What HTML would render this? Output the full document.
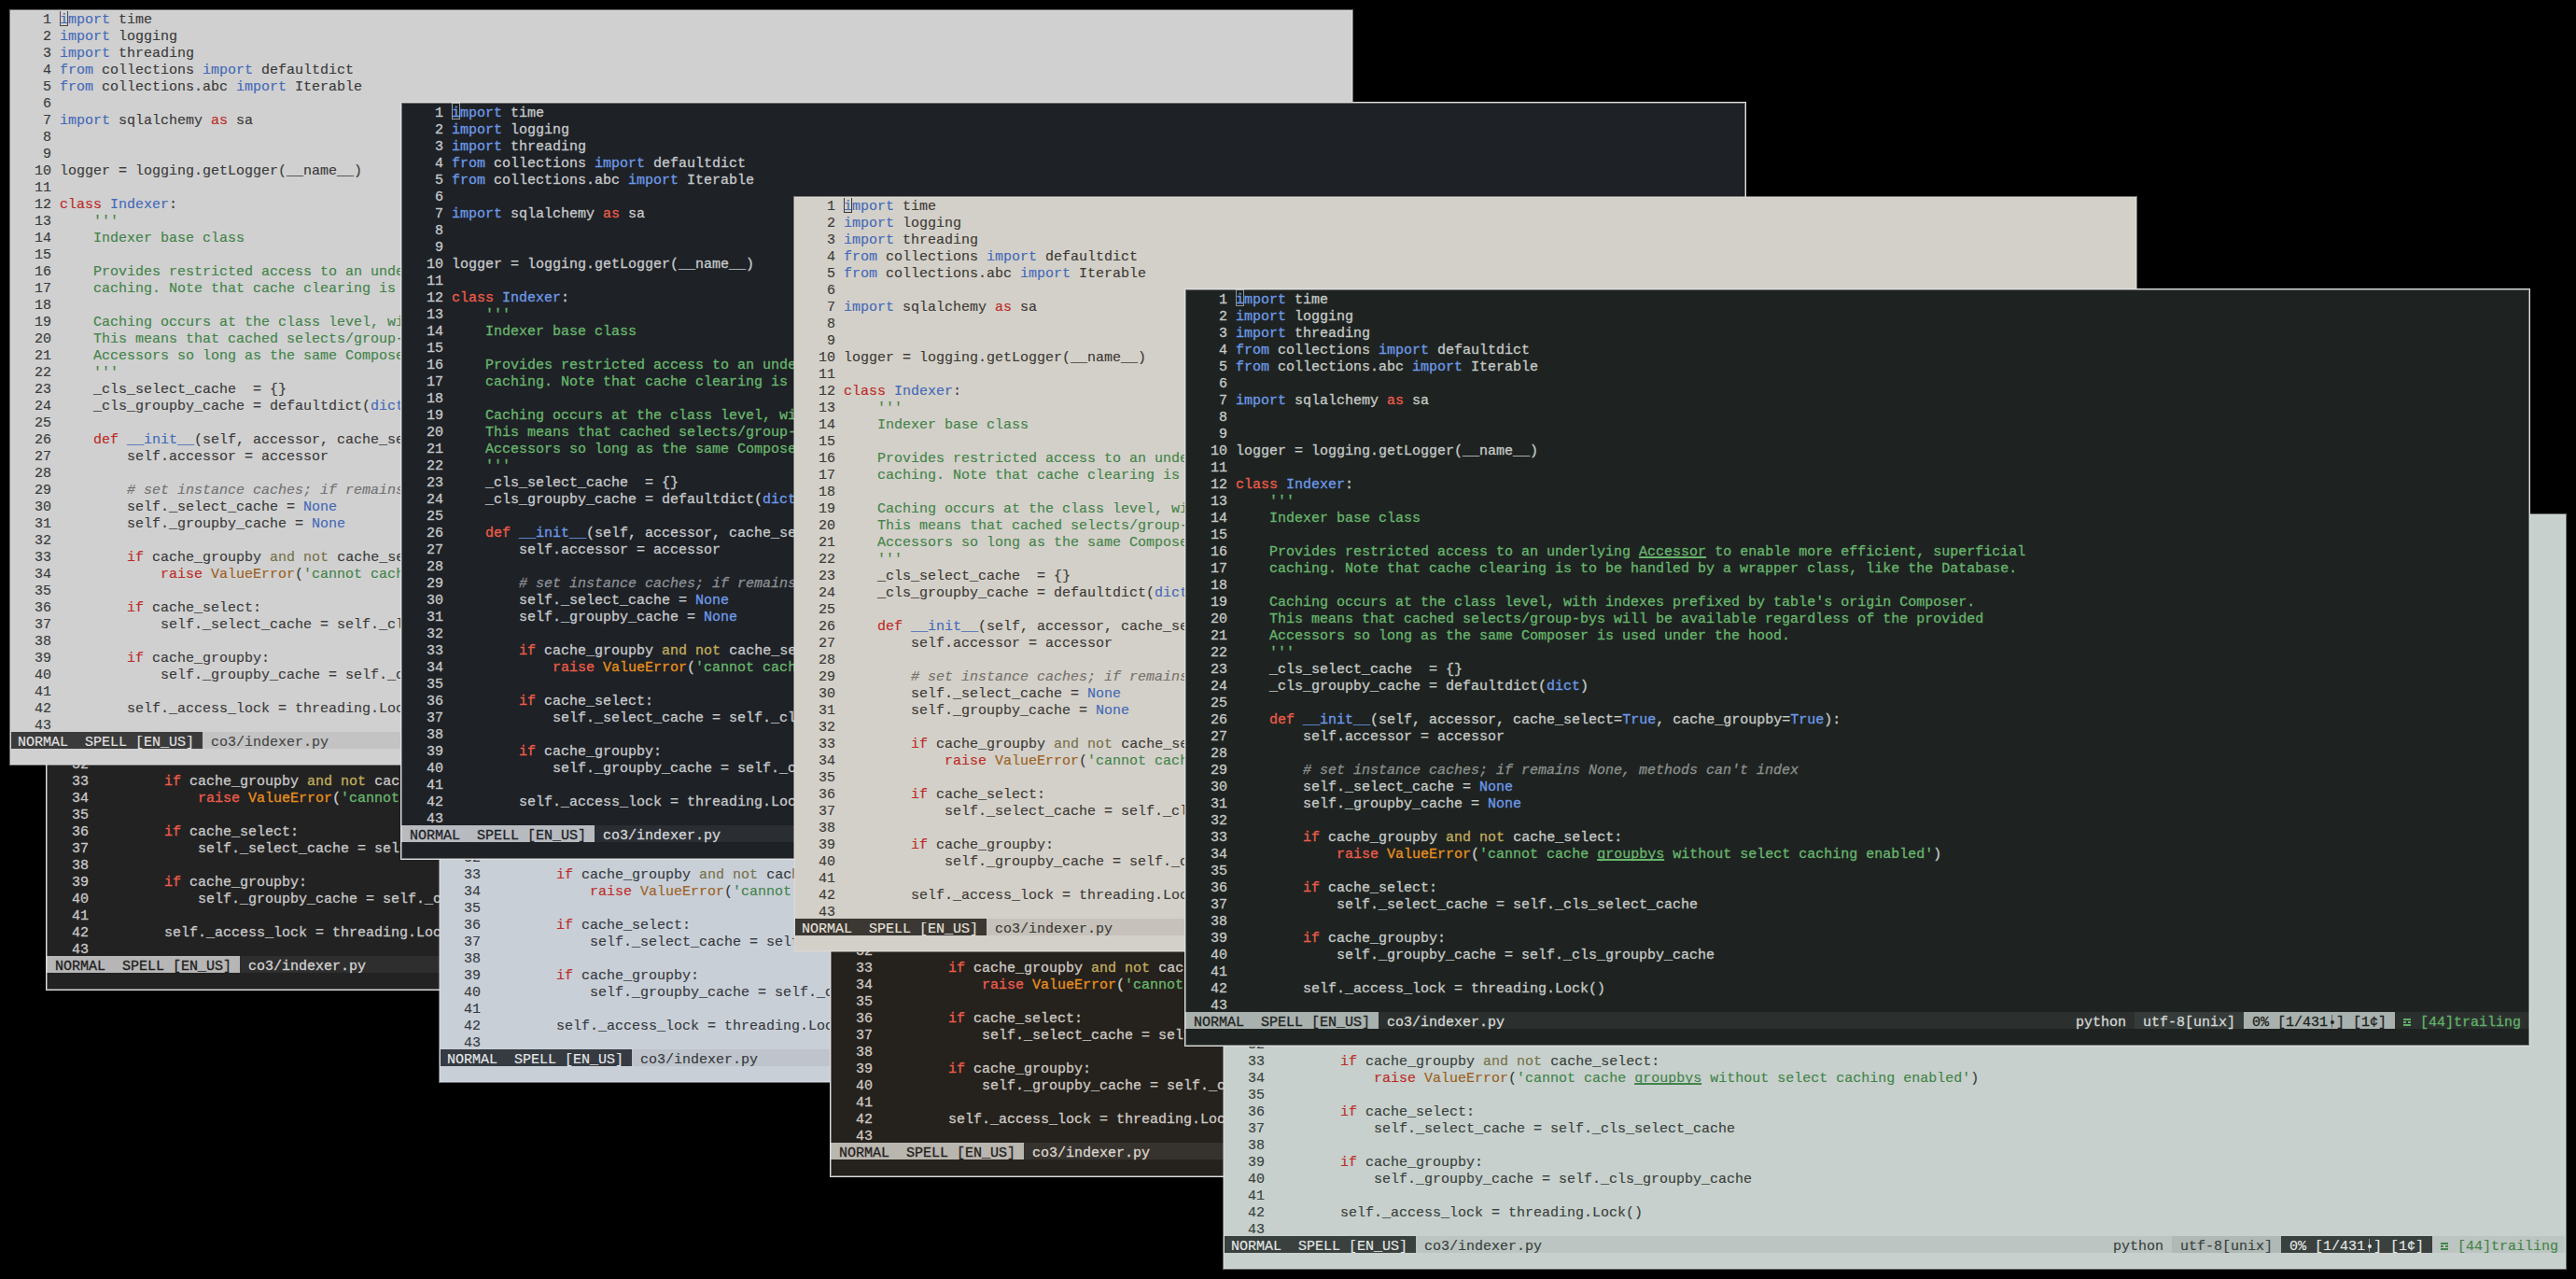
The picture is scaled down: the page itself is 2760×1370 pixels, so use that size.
<!DOCTYPE html><html><head><meta charset="utf-8"><style>
.lt{width:1436px!important;height:806px!important;}
.lt .code{left:-2px;top:1px;}
.lt .st{left:-2px;top:772px;}
html,body{margin:0;padding:0;background:#000;}
body{width:2760px;height:1370px;overflow:hidden;position:relative;}
.win{position:absolute;width:1440px;height:810px;overflow:hidden;font-family:"Liberation Mono",monospace;font-size:15px;line-height:18px;white-space:pre;-webkit-text-stroke:0.35px currentColor;}
.code{position:absolute;left:0;top:3px;width:1440px;}
.l{height:18px;position:relative;}
.l span, .st span{position:relative;}
.st{position:absolute;left:0;top:774px;width:1440px;height:18px;}
.st>span{position:absolute;top:0;height:15px;padding-top:3px;}
.md{left:0;width:207px;}
.md b{font-weight:normal;}
.fn{left:207px;width:810px;}
.py{left:954px;width:63px;}
.ut{left:1017px;width:117px;}
.pc{left:1134px;width:162px;}
.tr{left:1296px;width:144px;}
.m{font-style:italic;}
.u{text-decoration:underline;text-decoration-thickness:2px;text-underline-offset:1px;text-decoration-skip-ink:none;}
.cur{position:absolute;left:54px;top:0;width:7px;height:16px;border:1px solid;}
.lt .cur{left:52px;top:-2px;}
.ln{display:inline-block;width:9px;height:18px;vertical-align:top;top:-3px;}
.ln:before{content:"";position:absolute;left:4px;top:3px;width:1px;height:14px;background:currentColor;opacity:.55;}
.ln:after{content:"";position:absolute;left:2.5px;top:8.5px;width:4px;height:4px;border-radius:50%;background:currentColor;}
.tg{display:inline-block;width:9px;height:18px;vertical-align:top;top:-3px;}
.tg i{position:absolute;left:0px;width:8px;height:2px;background:currentColor;}
.tg i:nth-child(1){top:7px}
.tg i:nth-child(2){top:10px;background:linear-gradient(90deg,currentColor 0 3px,transparent 3px 5px,currentColor 5px 8px);}
.tg i:nth-child(3){top:13px}

.w1{background:#d0d0d0;color:#3b3b3b;box-shadow:0 0 0 1px #d8d8d8,0 0 0 2px #d8d8d880;}
.w1 .n{color:#3b3b3b}
.w1 .cur{border-color:#4a4a4a}
.w1{-webkit-text-stroke-width:0.15px}
.w1 .k{color:#4569b8}
.w1 .s{color:#bd2c28}
.w1 .o{color:#76704a}
.w1 .e{color:#9b6124}
.w1 .d{color:#43844a}
.w1 .m{color:#727272}
.w1 .c,.w1 .f{color:#4569b8}
.w1 .u{color:#43844a}
.w1 .md{background:#3b3b3b;color:#e2e2e2}
.w1 .fn,.w1 .py,.w1 .tr{background:#c3c3c3;color:#454545}
.w1 .ut{background:#b8b8b8;color:#3b3b3b}
.w1 .pc{background:#3b3b3b;color:#e2e2e2}
.w1 .tr{color:#43844a}
.w1b{background:#222222;color:#c8c8c8;box-shadow:0 0 0 1px #e0e0e0;}
.w1b:after{content:"";position:absolute;left:0;top:0;right:0;bottom:0;box-shadow:inset 0 0 0 1px #e0e0e070;pointer-events:none;}
.w1b .n{color:#c8c8c8}
.w1b .cur{border-color:#d2d2d2}
.w1b{-webkit-text-stroke-width:0.3px}
.w1b .k{color:#6d9ae8}
.w1b .s{color:#ec5c4a}
.w1b .o{color:#c0ad5e}
.w1b .e{color:#e6901e}
.w1b .d{color:#68b66d}
.w1b .m{color:#8c8c8c}
.w1b .c,.w1b .f{color:#6d9ae8}
.w1b .u{color:#68b66d}
.w1b .md{background:#b6b6b6;color:#202020}
.w1b .fn,.w1b .py,.w1b .tr{background:#2e2e2e;color:#d2d2d2}
.w1b .ut{background:#383838;color:#d2d2d2}
.w1b .pc{background:#b6b6b6;color:#202020}
.w1b .tr{color:#62b068}
.w2{background:#1e2125;color:#c6c9cc;box-shadow:0 0 0 1px #e0e0e0;}
.w2:after{content:"";position:absolute;left:0;top:0;right:0;bottom:0;box-shadow:inset 0 0 0 1px #e0e0e070;pointer-events:none;}
.w2 .n{color:#c6c9cc}
.w2 .cur{border-color:#9a9da2}
.w2{-webkit-text-stroke-width:0.3px}
.w2 .k{color:#6d9ae8}
.w2 .s{color:#ec5c4a}
.w2 .o{color:#c0ad5e}
.w2 .e{color:#e6901e}
.w2 .d{color:#68b66d}
.w2 .m{color:#8c9096}
.w2 .c,.w2 .f{color:#6d9ae8}
.w2 .u{color:#68b66d}
.w2 .md{background:#b7bbc0;color:#1e2125}
.w2 .fn,.w2 .py,.w2 .tr{background:#2a2e33;color:#d3d5d8}
.w2 .ut{background:#353a40;color:#d3d5d8}
.w2 .pc{background:#b7bbc0;color:#1e2125}
.w2 .tr{color:#62b068}
.w2b{background:#c9cfd7;color:#363a40;box-shadow:0 0 0 1px #d3d9e0,0 0 0 2px #d3d9e080;}
.w2b .n{color:#363a40}
.w2b .cur{border-color:#363a40}
.w2b{-webkit-text-stroke-width:0.15px}
.w2b .k{color:#4569b8}
.w2b .s{color:#bd2c28}
.w2b .o{color:#76704a}
.w2b .e{color:#9b6124}
.w2b .d{color:#43844a}
.w2b .m{color:#6e737a}
.w2b .c,.w2b .f{color:#4569b8}
.w2b .u{color:#43844a}
.w2b .md{background:#363b41;color:#e4e8ec}
.w2b .fn,.w2b .py,.w2b .tr{background:#bfc4cc;color:#363a40}
.w2b .ut{background:#b3b8c0;color:#363a40}
.w2b .pc{background:#363b41;color:#e4e8ec}
.w2b .tr{color:#43844a}
.w3{background:#d3d0c9;color:#3d3a36;box-shadow:0 0 0 1px #dad8d3,0 0 0 2px #dad8d380;}
.w3 .n{color:#3d3a36}
.w3 .cur{border-color:#3d3a36}
.w3{-webkit-text-stroke-width:0.15px}
.w3 .k{color:#4569b8}
.w3 .s{color:#bd2c28}
.w3 .o{color:#76704a}
.w3 .e{color:#9b6124}
.w3 .d{color:#43844a}
.w3 .m{color:#75716b}
.w3 .c,.w3 .f{color:#4569b8}
.w3 .u{color:#43844a}
.w3 .md{background:#3b3733;color:#e6e2db}
.w3 .fn,.w3 .py,.w3 .tr{background:#c6c2bb;color:#3d3a36}
.w3 .ut{background:#bab6af;color:#3d3a36}
.w3 .pc{background:#3b3733;color:#e6e2db}
.w3 .tr{color:#43844a}
.w3b{background:#25211d;color:#cdc9c2;box-shadow:0 0 0 1px #e0e0e0;}
.w3b:after{content:"";position:absolute;left:0;top:0;right:0;bottom:0;box-shadow:inset 0 0 0 1px #e0e0e070;pointer-events:none;}
.w3b .n{color:#cdc9c2}
.w3b .cur{border-color:#d9d5ce}
.w3b{-webkit-text-stroke-width:0.3px}
.w3b .k{color:#6d9ae8}
.w3b .s{color:#ec5c4a}
.w3b .o{color:#c0ad5e}
.w3b .e{color:#e6901e}
.w3b .d{color:#68b66d}
.w3b .m{color:#8f8a84}
.w3b .c,.w3b .f{color:#6d9ae8}
.w3b .u{color:#68b66d}
.w3b .md{background:#b9b6af;color:#25211d}
.w3b .fn,.w3b .py,.w3b .tr{background:#36322d;color:#d9d5ce}
.w3b .ut{background:#403b36;color:#d9d5ce}
.w3b .pc{background:#b9b6af;color:#25211d}
.w3b .tr{color:#62b068}
.w4{background:#1e2321;color:#c6cac7;box-shadow:0 0 0 1px #dfe0df;}
.w4:after{content:"";position:absolute;left:0;top:0;right:0;bottom:0;box-shadow:inset 0 0 0 1px #dfe0df70;pointer-events:none;}
.w4 .n{color:#c6cac7}
.w4 .cur{border-color:#8f9491}
.w4{-webkit-text-stroke-width:0.3px}
.w4 .k{color:#6d9ae8}
.w4 .s{color:#ec5c4a}
.w4 .o{color:#c0ad5e}
.w4 .e{color:#e6901e}
.w4 .d{color:#68b66d}
.w4 .m{color:#8b908d}
.w4 .c,.w4 .f{color:#6d9ae8}
.w4 .u{color:#68b66d}
.w4 .md{background:#a9b1ae;color:#1e2321}
.w4 .fn,.w4 .py,.w4 .tr{background:#2b302e;color:#d4d7d5}
.w4 .ut{background:#353b39;color:#d4d7d5}
.w4 .pc{background:#a9b1ae;color:#1e2321}
.w4 .tr{color:#62b068}
.w4b{background:#c7d0cc;color:#39403d;box-shadow:0 0 0 1px #d1d9d6,0 0 0 2px #d1d9d680;}
.w4b .n{color:#39403d}
.w4b .cur{border-color:#39403d}
.w4b{-webkit-text-stroke-width:0.15px}
.w4b .k{color:#4569b8}
.w4b .s{color:#bd2c28}
.w4b .o{color:#76704a}
.w4b .e{color:#9b6124}
.w4b .d{color:#43844a}
.w4b .m{color:#6e7572}
.w4b .c,.w4b .f{color:#4569b8}
.w4b .u{color:#43844a}
.w4b .md{background:#3a403e;color:#e2e8e5}
.w4b .fn,.w4b .py,.w4b .tr{background:#bcc5c1;color:#39403d}
.w4b .ut{background:#b0b9b5;color:#39403d}
.w4b .pc{background:#3a403e;color:#e2e8e5}
.w4b .tr{color:#43844a}</style></head><body><div class="win w1b" style="left:50px;top:250px;z-index:1"><div class="code"><div class="l"><span class="n">    1 </span><span class="k">import</span> time</div><div class="l"><span class="n">    2 </span><span class="k">import</span> logging</div><div class="l"><span class="n">    3 </span><span class="k">import</span> threading</div><div class="l"><span class="n">    4 </span><span class="k">from</span> collections <span class="k">import</span> defaultdict</div><div class="l"><span class="n">    5 </span><span class="k">from</span> collections.abc <span class="k">import</span> Iterable</div><div class="l"><span class="n">    6 </span></div><div class="l"><span class="n">    7 </span><span class="k">import</span> sqlalchemy <span class="s">as</span> sa</div><div class="l"><span class="n">    8 </span></div><div class="l"><span class="n">    9 </span></div><div class="l"><span class="n">   10 </span>logger = logging.getLogger(__name__)</div><div class="l"><span class="n">   11 </span></div><div class="l"><span class="n">   12 </span><span class="s">class</span> <span class="f">Indexer</span>:</div><div class="l"><span class="n">   13 </span>    <span class="d">'''</span></div><div class="l"><span class="n">   14 </span>    <span class="d">Indexer base class</span></div><div class="l"><span class="n">   15 </span></div><div class="l"><span class="n">   16 </span>    <span class="d">Provides restricted access to an underlying </span><span class="u">Accessor</span><span class="d"> to enable more efficient, superficial</span></div><div class="l"><span class="n">   17 </span>    <span class="d">caching. Note that cache clearing is to be handled by a wrapper class, like the Database.</span></div><div class="l"><span class="n">   18 </span></div><div class="l"><span class="n">   19 </span>    <span class="d">Caching occurs at the class level, with indexes prefixed by table's origin Composer.</span></div><div class="l"><span class="n">   20 </span>    <span class="d">This means that cached selects/group-bys will be available regardless of the provided</span></div><div class="l"><span class="n">   21 </span>    <span class="d">Accessors so long as the same Composer is used under the hood.</span></div><div class="l"><span class="n">   22 </span>    <span class="d">'''</span></div><div class="l"><span class="n">   23 </span>    _cls_select_cache  = {}</div><div class="l"><span class="n">   24 </span>    _cls_groupby_cache = defaultdict(<span class="c">dict</span>)</div><div class="l"><span class="n">   25 </span></div><div class="l"><span class="n">   26 </span>    <span class="s">def</span> <span class="f">__init__</span>(self, accessor, cache_select=<span class="c">True</span>, cache_groupby=<span class="c">True</span>):</div><div class="l"><span class="n">   27 </span>        self.accessor = accessor</div><div class="l"><span class="n">   28 </span></div><div class="l"><span class="n">   29 </span>        <span class="m"># set instance caches; if remains None, methods can't index</span></div><div class="l"><span class="n">   30 </span>        self._select_cache = <span class="c">None</span></div><div class="l"><span class="n">   31 </span>        self._groupby_cache = <span class="c">None</span></div><div class="l"><span class="n">   32 </span></div><div class="l"><span class="n">   33 </span>        <span class="s">if</span> cache_groupby <span class="o">and</span> <span class="o">not</span> cache_select:</div><div class="l"><span class="n">   34 </span>            <span class="s">raise</span> <span class="e">ValueError</span>(<span class="d">'cannot cache </span><span class="u">groupbys</span><span class="d"> without select caching enabled'</span>)</div><div class="l"><span class="n">   35 </span></div><div class="l"><span class="n">   36 </span>        <span class="s">if</span> cache_select:</div><div class="l"><span class="n">   37 </span>            self._select_cache = self._cls_select_cache</div><div class="l"><span class="n">   38 </span></div><div class="l"><span class="n">   39 </span>        <span class="s">if</span> cache_groupby:</div><div class="l"><span class="n">   40 </span>            self._groupby_cache = self._cls_groupby_cache</div><div class="l"><span class="n">   41 </span></div><div class="l"><span class="n">   42 </span>        self._access_lock = threading.Lock()</div><div class="l"><span class="n">   43 </span></div></div><div class="st"><span class="md"> <b>NORMAL</b>  SPELL [EN_US] </span><span class="fn"> co3/indexer.py</span><span class="py">python </span><span class="ut"> utf-8[unix] </span><span class="pc"> 0% [1/431<span class="ln"></span>] [1¢] </span><span class="tr"> <span class="tg"><i></i><i class="br"></i><i></i></span> [44]trailing </span></div></div>
<div class="win lt w1" style="left:12px;top:12px;z-index:2"><div class="code"><div class="l"><span class="n">    1 </span><span class="k">import</span> time</div><div class="l"><span class="n">    2 </span><span class="k">import</span> logging</div><div class="l"><span class="n">    3 </span><span class="k">import</span> threading</div><div class="l"><span class="n">    4 </span><span class="k">from</span> collections <span class="k">import</span> defaultdict</div><div class="l"><span class="n">    5 </span><span class="k">from</span> collections.abc <span class="k">import</span> Iterable</div><div class="l"><span class="n">    6 </span></div><div class="l"><span class="n">    7 </span><span class="k">import</span> sqlalchemy <span class="s">as</span> sa</div><div class="l"><span class="n">    8 </span></div><div class="l"><span class="n">    9 </span></div><div class="l"><span class="n">   10 </span>logger = logging.getLogger(__name__)</div><div class="l"><span class="n">   11 </span></div><div class="l"><span class="n">   12 </span><span class="s">class</span> <span class="f">Indexer</span>:</div><div class="l"><span class="n">   13 </span>    <span class="d">'''</span></div><div class="l"><span class="n">   14 </span>    <span class="d">Indexer base class</span></div><div class="l"><span class="n">   15 </span></div><div class="l"><span class="n">   16 </span>    <span class="d">Provides restricted access to an underlying </span><span class="u">Accessor</span><span class="d"> to enable more efficient, superficial</span></div><div class="l"><span class="n">   17 </span>    <span class="d">caching. Note that cache clearing is to be handled by a wrapper class, like the Database.</span></div><div class="l"><span class="n">   18 </span></div><div class="l"><span class="n">   19 </span>    <span class="d">Caching occurs at the class level, with indexes prefixed by table's origin Composer.</span></div><div class="l"><span class="n">   20 </span>    <span class="d">This means that cached selects/group-bys will be available regardless of the provided</span></div><div class="l"><span class="n">   21 </span>    <span class="d">Accessors so long as the same Composer is used under the hood.</span></div><div class="l"><span class="n">   22 </span>    <span class="d">'''</span></div><div class="l"><span class="n">   23 </span>    _cls_select_cache  = {}</div><div class="l"><span class="n">   24 </span>    _cls_groupby_cache = defaultdict(<span class="c">dict</span>)</div><div class="l"><span class="n">   25 </span></div><div class="l"><span class="n">   26 </span>    <span class="s">def</span> <span class="f">__init__</span>(self, accessor, cache_select=<span class="c">True</span>, cache_groupby=<span class="c">True</span>):</div><div class="l"><span class="n">   27 </span>        self.accessor = accessor</div><div class="l"><span class="n">   28 </span></div><div class="l"><span class="n">   29 </span>        <span class="m"># set instance caches; if remains None, methods can't index</span></div><div class="l"><span class="n">   30 </span>        self._select_cache = <span class="c">None</span></div><div class="l"><span class="n">   31 </span>        self._groupby_cache = <span class="c">None</span></div><div class="l"><span class="n">   32 </span></div><div class="l"><span class="n">   33 </span>        <span class="s">if</span> cache_groupby <span class="o">and</span> <span class="o">not</span> cache_select:</div><div class="l"><span class="n">   34 </span>            <span class="s">raise</span> <span class="e">ValueError</span>(<span class="d">'cannot cache </span><span class="u">groupbys</span><span class="d"> without select caching enabled'</span>)</div><div class="l"><span class="n">   35 </span></div><div class="l"><span class="n">   36 </span>        <span class="s">if</span> cache_select:</div><div class="l"><span class="n">   37 </span>            self._select_cache = self._cls_select_cache</div><div class="l"><span class="n">   38 </span></div><div class="l"><span class="n">   39 </span>        <span class="s">if</span> cache_groupby:</div><div class="l"><span class="n">   40 </span>            self._groupby_cache = self._cls_groupby_cache</div><div class="l"><span class="n">   41 </span></div><div class="l"><span class="n">   42 </span>        self._access_lock = threading.Lock()</div><div class="l"><span class="n">   43 </span></div></div><div class="cur"></div><div class="st"><span class="md"> <b>NORMAL</b>  SPELL [EN_US] </span><span class="fn"> co3/indexer.py</span><span class="py">python </span><span class="ut"> utf-8[unix] </span><span class="pc"> 0% [1/431<span class="ln"></span>] [1¢] </span><span class="tr"> <span class="tg"><i></i><i class="br"></i><i></i></span> [44]trailing </span></div></div>
<div class="win lt w2b" style="left:472px;top:352px;z-index:3"><div class="code"><div class="l"><span class="n">    1 </span><span class="k">import</span> time</div><div class="l"><span class="n">    2 </span><span class="k">import</span> logging</div><div class="l"><span class="n">    3 </span><span class="k">import</span> threading</div><div class="l"><span class="n">    4 </span><span class="k">from</span> collections <span class="k">import</span> defaultdict</div><div class="l"><span class="n">    5 </span><span class="k">from</span> collections.abc <span class="k">import</span> Iterable</div><div class="l"><span class="n">    6 </span></div><div class="l"><span class="n">    7 </span><span class="k">import</span> sqlalchemy <span class="s">as</span> sa</div><div class="l"><span class="n">    8 </span></div><div class="l"><span class="n">    9 </span></div><div class="l"><span class="n">   10 </span>logger = logging.getLogger(__name__)</div><div class="l"><span class="n">   11 </span></div><div class="l"><span class="n">   12 </span><span class="s">class</span> <span class="f">Indexer</span>:</div><div class="l"><span class="n">   13 </span>    <span class="d">'''</span></div><div class="l"><span class="n">   14 </span>    <span class="d">Indexer base class</span></div><div class="l"><span class="n">   15 </span></div><div class="l"><span class="n">   16 </span>    <span class="d">Provides restricted access to an underlying </span><span class="u">Accessor</span><span class="d"> to enable more efficient, superficial</span></div><div class="l"><span class="n">   17 </span>    <span class="d">caching. Note that cache clearing is to be handled by a wrapper class, like the Database.</span></div><div class="l"><span class="n">   18 </span></div><div class="l"><span class="n">   19 </span>    <span class="d">Caching occurs at the class level, with indexes prefixed by table's origin Composer.</span></div><div class="l"><span class="n">   20 </span>    <span class="d">This means that cached selects/group-bys will be available regardless of the provided</span></div><div class="l"><span class="n">   21 </span>    <span class="d">Accessors so long as the same Composer is used under the hood.</span></div><div class="l"><span class="n">   22 </span>    <span class="d">'''</span></div><div class="l"><span class="n">   23 </span>    _cls_select_cache  = {}</div><div class="l"><span class="n">   24 </span>    _cls_groupby_cache = defaultdict(<span class="c">dict</span>)</div><div class="l"><span class="n">   25 </span></div><div class="l"><span class="n">   26 </span>    <span class="s">def</span> <span class="f">__init__</span>(self, accessor, cache_select=<span class="c">True</span>, cache_groupby=<span class="c">True</span>):</div><div class="l"><span class="n">   27 </span>        self.accessor = accessor</div><div class="l"><span class="n">   28 </span></div><div class="l"><span class="n">   29 </span>        <span class="m"># set instance caches; if remains None, methods can't index</span></div><div class="l"><span class="n">   30 </span>        self._select_cache = <span class="c">None</span></div><div class="l"><span class="n">   31 </span>        self._groupby_cache = <span class="c">None</span></div><div class="l"><span class="n">   32 </span></div><div class="l"><span class="n">   33 </span>        <span class="s">if</span> cache_groupby <span class="o">and</span> <span class="o">not</span> cache_select:</div><div class="l"><span class="n">   34 </span>            <span class="s">raise</span> <span class="e">ValueError</span>(<span class="d">'cannot cache </span><span class="u">groupbys</span><span class="d"> without select caching enabled'</span>)</div><div class="l"><span class="n">   35 </span></div><div class="l"><span class="n">   36 </span>        <span class="s">if</span> cache_select:</div><div class="l"><span class="n">   37 </span>            self._select_cache = self._cls_select_cache</div><div class="l"><span class="n">   38 </span></div><div class="l"><span class="n">   39 </span>        <span class="s">if</span> cache_groupby:</div><div class="l"><span class="n">   40 </span>            self._groupby_cache = self._cls_groupby_cache</div><div class="l"><span class="n">   41 </span></div><div class="l"><span class="n">   42 </span>        self._access_lock = threading.Lock()</div><div class="l"><span class="n">   43 </span></div></div><div class="st"><span class="md"> <b>NORMAL</b>  SPELL [EN_US] </span><span class="fn"> co3/indexer.py</span><span class="py">python </span><span class="ut"> utf-8[unix] </span><span class="pc"> 0% [1/431<span class="ln"></span>] [1¢] </span><span class="tr"> <span class="tg"><i></i><i class="br"></i><i></i></span> [44]trailing </span></div></div>
<div class="win w2" style="left:430px;top:110px;z-index:4"><div class="code"><div class="l"><span class="n">    1 </span><span class="k">import</span> time</div><div class="l"><span class="n">    2 </span><span class="k">import</span> logging</div><div class="l"><span class="n">    3 </span><span class="k">import</span> threading</div><div class="l"><span class="n">    4 </span><span class="k">from</span> collections <span class="k">import</span> defaultdict</div><div class="l"><span class="n">    5 </span><span class="k">from</span> collections.abc <span class="k">import</span> Iterable</div><div class="l"><span class="n">    6 </span></div><div class="l"><span class="n">    7 </span><span class="k">import</span> sqlalchemy <span class="s">as</span> sa</div><div class="l"><span class="n">    8 </span></div><div class="l"><span class="n">    9 </span></div><div class="l"><span class="n">   10 </span>logger = logging.getLogger(__name__)</div><div class="l"><span class="n">   11 </span></div><div class="l"><span class="n">   12 </span><span class="s">class</span> <span class="f">Indexer</span>:</div><div class="l"><span class="n">   13 </span>    <span class="d">'''</span></div><div class="l"><span class="n">   14 </span>    <span class="d">Indexer base class</span></div><div class="l"><span class="n">   15 </span></div><div class="l"><span class="n">   16 </span>    <span class="d">Provides restricted access to an underlying </span><span class="u">Accessor</span><span class="d"> to enable more efficient, superficial</span></div><div class="l"><span class="n">   17 </span>    <span class="d">caching. Note that cache clearing is to be handled by a wrapper class, like the Database.</span></div><div class="l"><span class="n">   18 </span></div><div class="l"><span class="n">   19 </span>    <span class="d">Caching occurs at the class level, with indexes prefixed by table's origin Composer.</span></div><div class="l"><span class="n">   20 </span>    <span class="d">This means that cached selects/group-bys will be available regardless of the provided</span></div><div class="l"><span class="n">   21 </span>    <span class="d">Accessors so long as the same Composer is used under the hood.</span></div><div class="l"><span class="n">   22 </span>    <span class="d">'''</span></div><div class="l"><span class="n">   23 </span>    _cls_select_cache  = {}</div><div class="l"><span class="n">   24 </span>    _cls_groupby_cache = defaultdict(<span class="c">dict</span>)</div><div class="l"><span class="n">   25 </span></div><div class="l"><span class="n">   26 </span>    <span class="s">def</span> <span class="f">__init__</span>(self, accessor, cache_select=<span class="c">True</span>, cache_groupby=<span class="c">True</span>):</div><div class="l"><span class="n">   27 </span>        self.accessor = accessor</div><div class="l"><span class="n">   28 </span></div><div class="l"><span class="n">   29 </span>        <span class="m"># set instance caches; if remains None, methods can't index</span></div><div class="l"><span class="n">   30 </span>        self._select_cache = <span class="c">None</span></div><div class="l"><span class="n">   31 </span>        self._groupby_cache = <span class="c">None</span></div><div class="l"><span class="n">   32 </span></div><div class="l"><span class="n">   33 </span>        <span class="s">if</span> cache_groupby <span class="o">and</span> <span class="o">not</span> cache_select:</div><div class="l"><span class="n">   34 </span>            <span class="s">raise</span> <span class="e">ValueError</span>(<span class="d">'cannot cache </span><span class="u">groupbys</span><span class="d"> without select caching enabled'</span>)</div><div class="l"><span class="n">   35 </span></div><div class="l"><span class="n">   36 </span>        <span class="s">if</span> cache_select:</div><div class="l"><span class="n">   37 </span>            self._select_cache = self._cls_select_cache</div><div class="l"><span class="n">   38 </span></div><div class="l"><span class="n">   39 </span>        <span class="s">if</span> cache_groupby:</div><div class="l"><span class="n">   40 </span>            self._groupby_cache = self._cls_groupby_cache</div><div class="l"><span class="n">   41 </span></div><div class="l"><span class="n">   42 </span>        self._access_lock = threading.Lock()</div><div class="l"><span class="n">   43 </span></div></div><div class="cur"></div><div class="st"><span class="md"> <b>NORMAL</b>  SPELL [EN_US] </span><span class="fn"> co3/indexer.py</span><span class="py">python </span><span class="ut"> utf-8[unix] </span><span class="pc"> 0% [1/431<span class="ln"></span>] [1¢] </span><span class="tr"> <span class="tg"><i></i><i class="br"></i><i></i></span> [44]trailing </span></div></div>
<div class="win w3b" style="left:890px;top:450px;z-index:5"><div class="code"><div class="l"><span class="n">    1 </span><span class="k">import</span> time</div><div class="l"><span class="n">    2 </span><span class="k">import</span> logging</div><div class="l"><span class="n">    3 </span><span class="k">import</span> threading</div><div class="l"><span class="n">    4 </span><span class="k">from</span> collections <span class="k">import</span> defaultdict</div><div class="l"><span class="n">    5 </span><span class="k">from</span> collections.abc <span class="k">import</span> Iterable</div><div class="l"><span class="n">    6 </span></div><div class="l"><span class="n">    7 </span><span class="k">import</span> sqlalchemy <span class="s">as</span> sa</div><div class="l"><span class="n">    8 </span></div><div class="l"><span class="n">    9 </span></div><div class="l"><span class="n">   10 </span>logger = logging.getLogger(__name__)</div><div class="l"><span class="n">   11 </span></div><div class="l"><span class="n">   12 </span><span class="s">class</span> <span class="f">Indexer</span>:</div><div class="l"><span class="n">   13 </span>    <span class="d">'''</span></div><div class="l"><span class="n">   14 </span>    <span class="d">Indexer base class</span></div><div class="l"><span class="n">   15 </span></div><div class="l"><span class="n">   16 </span>    <span class="d">Provides restricted access to an underlying </span><span class="u">Accessor</span><span class="d"> to enable more efficient, superficial</span></div><div class="l"><span class="n">   17 </span>    <span class="d">caching. Note that cache clearing is to be handled by a wrapper class, like the Database.</span></div><div class="l"><span class="n">   18 </span></div><div class="l"><span class="n">   19 </span>    <span class="d">Caching occurs at the class level, with indexes prefixed by table's origin Composer.</span></div><div class="l"><span class="n">   20 </span>    <span class="d">This means that cached selects/group-bys will be available regardless of the provided</span></div><div class="l"><span class="n">   21 </span>    <span class="d">Accessors so long as the same Composer is used under the hood.</span></div><div class="l"><span class="n">   22 </span>    <span class="d">'''</span></div><div class="l"><span class="n">   23 </span>    _cls_select_cache  = {}</div><div class="l"><span class="n">   24 </span>    _cls_groupby_cache = defaultdict(<span class="c">dict</span>)</div><div class="l"><span class="n">   25 </span></div><div class="l"><span class="n">   26 </span>    <span class="s">def</span> <span class="f">__init__</span>(self, accessor, cache_select=<span class="c">True</span>, cache_groupby=<span class="c">True</span>):</div><div class="l"><span class="n">   27 </span>        self.accessor = accessor</div><div class="l"><span class="n">   28 </span></div><div class="l"><span class="n">   29 </span>        <span class="m"># set instance caches; if remains None, methods can't index</span></div><div class="l"><span class="n">   30 </span>        self._select_cache = <span class="c">None</span></div><div class="l"><span class="n">   31 </span>        self._groupby_cache = <span class="c">None</span></div><div class="l"><span class="n">   32 </span></div><div class="l"><span class="n">   33 </span>        <span class="s">if</span> cache_groupby <span class="o">and</span> <span class="o">not</span> cache_select:</div><div class="l"><span class="n">   34 </span>            <span class="s">raise</span> <span class="e">ValueError</span>(<span class="d">'cannot cache </span><span class="u">groupbys</span><span class="d"> without select caching enabled'</span>)</div><div class="l"><span class="n">   35 </span></div><div class="l"><span class="n">   36 </span>        <span class="s">if</span> cache_select:</div><div class="l"><span class="n">   37 </span>            self._select_cache = self._cls_select_cache</div><div class="l"><span class="n">   38 </span></div><div class="l"><span class="n">   39 </span>        <span class="s">if</span> cache_groupby:</div><div class="l"><span class="n">   40 </span>            self._groupby_cache = self._cls_groupby_cache</div><div class="l"><span class="n">   41 </span></div><div class="l"><span class="n">   42 </span>        self._access_lock = threading.Lock()</div><div class="l"><span class="n">   43 </span></div></div><div class="st"><span class="md"> <b>NORMAL</b>  SPELL [EN_US] </span><span class="fn"> co3/indexer.py</span><span class="py">python </span><span class="ut"> utf-8[unix] </span><span class="pc"> 0% [1/431<span class="ln"></span>] [1¢] </span><span class="tr"> <span class="tg"><i></i><i class="br"></i><i></i></span> [44]trailing </span></div></div>
<div class="win lt w3" style="left:852px;top:212px;z-index:6"><div class="code"><div class="l"><span class="n">    1 </span><span class="k">import</span> time</div><div class="l"><span class="n">    2 </span><span class="k">import</span> logging</div><div class="l"><span class="n">    3 </span><span class="k">import</span> threading</div><div class="l"><span class="n">    4 </span><span class="k">from</span> collections <span class="k">import</span> defaultdict</div><div class="l"><span class="n">    5 </span><span class="k">from</span> collections.abc <span class="k">import</span> Iterable</div><div class="l"><span class="n">    6 </span></div><div class="l"><span class="n">    7 </span><span class="k">import</span> sqlalchemy <span class="s">as</span> sa</div><div class="l"><span class="n">    8 </span></div><div class="l"><span class="n">    9 </span></div><div class="l"><span class="n">   10 </span>logger = logging.getLogger(__name__)</div><div class="l"><span class="n">   11 </span></div><div class="l"><span class="n">   12 </span><span class="s">class</span> <span class="f">Indexer</span>:</div><div class="l"><span class="n">   13 </span>    <span class="d">'''</span></div><div class="l"><span class="n">   14 </span>    <span class="d">Indexer base class</span></div><div class="l"><span class="n">   15 </span></div><div class="l"><span class="n">   16 </span>    <span class="d">Provides restricted access to an underlying </span><span class="u">Accessor</span><span class="d"> to enable more efficient, superficial</span></div><div class="l"><span class="n">   17 </span>    <span class="d">caching. Note that cache clearing is to be handled by a wrapper class, like the Database.</span></div><div class="l"><span class="n">   18 </span></div><div class="l"><span class="n">   19 </span>    <span class="d">Caching occurs at the class level, with indexes prefixed by table's origin Composer.</span></div><div class="l"><span class="n">   20 </span>    <span class="d">This means that cached selects/group-bys will be available regardless of the provided</span></div><div class="l"><span class="n">   21 </span>    <span class="d">Accessors so long as the same Composer is used under the hood.</span></div><div class="l"><span class="n">   22 </span>    <span class="d">'''</span></div><div class="l"><span class="n">   23 </span>    _cls_select_cache  = {}</div><div class="l"><span class="n">   24 </span>    _cls_groupby_cache = defaultdict(<span class="c">dict</span>)</div><div class="l"><span class="n">   25 </span></div><div class="l"><span class="n">   26 </span>    <span class="s">def</span> <span class="f">__init__</span>(self, accessor, cache_select=<span class="c">True</span>, cache_groupby=<span class="c">True</span>):</div><div class="l"><span class="n">   27 </span>        self.accessor = accessor</div><div class="l"><span class="n">   28 </span></div><div class="l"><span class="n">   29 </span>        <span class="m"># set instance caches; if remains None, methods can't index</span></div><div class="l"><span class="n">   30 </span>        self._select_cache = <span class="c">None</span></div><div class="l"><span class="n">   31 </span>        self._groupby_cache = <span class="c">None</span></div><div class="l"><span class="n">   32 </span></div><div class="l"><span class="n">   33 </span>        <span class="s">if</span> cache_groupby <span class="o">and</span> <span class="o">not</span> cache_select:</div><div class="l"><span class="n">   34 </span>            <span class="s">raise</span> <span class="e">ValueError</span>(<span class="d">'cannot cache </span><span class="u">groupbys</span><span class="d"> without select caching enabled'</span>)</div><div class="l"><span class="n">   35 </span></div><div class="l"><span class="n">   36 </span>        <span class="s">if</span> cache_select:</div><div class="l"><span class="n">   37 </span>            self._select_cache = self._cls_select_cache</div><div class="l"><span class="n">   38 </span></div><div class="l"><span class="n">   39 </span>        <span class="s">if</span> cache_groupby:</div><div class="l"><span class="n">   40 </span>            self._groupby_cache = self._cls_groupby_cache</div><div class="l"><span class="n">   41 </span></div><div class="l"><span class="n">   42 </span>        self._access_lock = threading.Lock()</div><div class="l"><span class="n">   43 </span></div></div><div class="cur"></div><div class="st"><span class="md"> <b>NORMAL</b>  SPELL [EN_US] </span><span class="fn"> co3/indexer.py</span><span class="py">python </span><span class="ut"> utf-8[unix] </span><span class="pc"> 0% [1/431<span class="ln"></span>] [1¢] </span><span class="tr"> <span class="tg"><i></i><i class="br"></i><i></i></span> [44]trailing </span></div></div>
<div class="win lt w4b" style="left:1312px;top:552px;z-index:7"><div class="code"><div class="l"><span class="n">    1 </span><span class="k">import</span> time</div><div class="l"><span class="n">    2 </span><span class="k">import</span> logging</div><div class="l"><span class="n">    3 </span><span class="k">import</span> threading</div><div class="l"><span class="n">    4 </span><span class="k">from</span> collections <span class="k">import</span> defaultdict</div><div class="l"><span class="n">    5 </span><span class="k">from</span> collections.abc <span class="k">import</span> Iterable</div><div class="l"><span class="n">    6 </span></div><div class="l"><span class="n">    7 </span><span class="k">import</span> sqlalchemy <span class="s">as</span> sa</div><div class="l"><span class="n">    8 </span></div><div class="l"><span class="n">    9 </span></div><div class="l"><span class="n">   10 </span>logger = logging.getLogger(__name__)</div><div class="l"><span class="n">   11 </span></div><div class="l"><span class="n">   12 </span><span class="s">class</span> <span class="f">Indexer</span>:</div><div class="l"><span class="n">   13 </span>    <span class="d">'''</span></div><div class="l"><span class="n">   14 </span>    <span class="d">Indexer base class</span></div><div class="l"><span class="n">   15 </span></div><div class="l"><span class="n">   16 </span>    <span class="d">Provides restricted access to an underlying </span><span class="u">Accessor</span><span class="d"> to enable more efficient, superficial</span></div><div class="l"><span class="n">   17 </span>    <span class="d">caching. Note that cache clearing is to be handled by a wrapper class, like the Database.</span></div><div class="l"><span class="n">   18 </span></div><div class="l"><span class="n">   19 </span>    <span class="d">Caching occurs at the class level, with indexes prefixed by table's origin Composer.</span></div><div class="l"><span class="n">   20 </span>    <span class="d">This means that cached selects/group-bys will be available regardless of the provided</span></div><div class="l"><span class="n">   21 </span>    <span class="d">Accessors so long as the same Composer is used under the hood.</span></div><div class="l"><span class="n">   22 </span>    <span class="d">'''</span></div><div class="l"><span class="n">   23 </span>    _cls_select_cache  = {}</div><div class="l"><span class="n">   24 </span>    _cls_groupby_cache = defaultdict(<span class="c">dict</span>)</div><div class="l"><span class="n">   25 </span></div><div class="l"><span class="n">   26 </span>    <span class="s">def</span> <span class="f">__init__</span>(self, accessor, cache_select=<span class="c">True</span>, cache_groupby=<span class="c">True</span>):</div><div class="l"><span class="n">   27 </span>        self.accessor = accessor</div><div class="l"><span class="n">   28 </span></div><div class="l"><span class="n">   29 </span>        <span class="m"># set instance caches; if remains None, methods can't index</span></div><div class="l"><span class="n">   30 </span>        self._select_cache = <span class="c">None</span></div><div class="l"><span class="n">   31 </span>        self._groupby_cache = <span class="c">None</span></div><div class="l"><span class="n">   32 </span></div><div class="l"><span class="n">   33 </span>        <span class="s">if</span> cache_groupby <span class="o">and</span> <span class="o">not</span> cache_select:</div><div class="l"><span class="n">   34 </span>            <span class="s">raise</span> <span class="e">ValueError</span>(<span class="d">'cannot cache </span><span class="u">groupbys</span><span class="d"> without select caching enabled'</span>)</div><div class="l"><span class="n">   35 </span></div><div class="l"><span class="n">   36 </span>        <span class="s">if</span> cache_select:</div><div class="l"><span class="n">   37 </span>            self._select_cache = self._cls_select_cache</div><div class="l"><span class="n">   38 </span></div><div class="l"><span class="n">   39 </span>        <span class="s">if</span> cache_groupby:</div><div class="l"><span class="n">   40 </span>            self._groupby_cache = self._cls_groupby_cache</div><div class="l"><span class="n">   41 </span></div><div class="l"><span class="n">   42 </span>        self._access_lock = threading.Lock()</div><div class="l"><span class="n">   43 </span></div></div><div class="st"><span class="md"> <b>NORMAL</b>  SPELL [EN_US] </span><span class="fn"> co3/indexer.py</span><span class="py">python </span><span class="ut"> utf-8[unix] </span><span class="pc"> 0% [1/431<span class="ln"></span>] [1¢] </span><span class="tr"> <span class="tg"><i></i><i class="br"></i><i></i></span> [44]trailing </span></div></div>
<div class="win w4" style="left:1270px;top:310px;z-index:8"><div class="code"><div class="l"><span class="n">    1 </span><span class="k">import</span> time</div><div class="l"><span class="n">    2 </span><span class="k">import</span> logging</div><div class="l"><span class="n">    3 </span><span class="k">import</span> threading</div><div class="l"><span class="n">    4 </span><span class="k">from</span> collections <span class="k">import</span> defaultdict</div><div class="l"><span class="n">    5 </span><span class="k">from</span> collections.abc <span class="k">import</span> Iterable</div><div class="l"><span class="n">    6 </span></div><div class="l"><span class="n">    7 </span><span class="k">import</span> sqlalchemy <span class="s">as</span> sa</div><div class="l"><span class="n">    8 </span></div><div class="l"><span class="n">    9 </span></div><div class="l"><span class="n">   10 </span>logger = logging.getLogger(__name__)</div><div class="l"><span class="n">   11 </span></div><div class="l"><span class="n">   12 </span><span class="s">class</span> <span class="f">Indexer</span>:</div><div class="l"><span class="n">   13 </span>    <span class="d">'''</span></div><div class="l"><span class="n">   14 </span>    <span class="d">Indexer base class</span></div><div class="l"><span class="n">   15 </span></div><div class="l"><span class="n">   16 </span>    <span class="d">Provides restricted access to an underlying </span><span class="u">Accessor</span><span class="d"> to enable more efficient, superficial</span></div><div class="l"><span class="n">   17 </span>    <span class="d">caching. Note that cache clearing is to be handled by a wrapper class, like the Database.</span></div><div class="l"><span class="n">   18 </span></div><div class="l"><span class="n">   19 </span>    <span class="d">Caching occurs at the class level, with indexes prefixed by table's origin Composer.</span></div><div class="l"><span class="n">   20 </span>    <span class="d">This means that cached selects/group-bys will be available regardless of the provided</span></div><div class="l"><span class="n">   21 </span>    <span class="d">Accessors so long as the same Composer is used under the hood.</span></div><div class="l"><span class="n">   22 </span>    <span class="d">'''</span></div><div class="l"><span class="n">   23 </span>    _cls_select_cache  = {}</div><div class="l"><span class="n">   24 </span>    _cls_groupby_cache = defaultdict(<span class="c">dict</span>)</div><div class="l"><span class="n">   25 </span></div><div class="l"><span class="n">   26 </span>    <span class="s">def</span> <span class="f">__init__</span>(self, accessor, cache_select=<span class="c">True</span>, cache_groupby=<span class="c">True</span>):</div><div class="l"><span class="n">   27 </span>        self.accessor = accessor</div><div class="l"><span class="n">   28 </span></div><div class="l"><span class="n">   29 </span>        <span class="m"># set instance caches; if remains None, methods can't index</span></div><div class="l"><span class="n">   30 </span>        self._select_cache = <span class="c">None</span></div><div class="l"><span class="n">   31 </span>        self._groupby_cache = <span class="c">None</span></div><div class="l"><span class="n">   32 </span></div><div class="l"><span class="n">   33 </span>        <span class="s">if</span> cache_groupby <span class="o">and</span> <span class="o">not</span> cache_select:</div><div class="l"><span class="n">   34 </span>            <span class="s">raise</span> <span class="e">ValueError</span>(<span class="d">'cannot cache </span><span class="u">groupbys</span><span class="d"> without select caching enabled'</span>)</div><div class="l"><span class="n">   35 </span></div><div class="l"><span class="n">   36 </span>        <span class="s">if</span> cache_select:</div><div class="l"><span class="n">   37 </span>            self._select_cache = self._cls_select_cache</div><div class="l"><span class="n">   38 </span></div><div class="l"><span class="n">   39 </span>        <span class="s">if</span> cache_groupby:</div><div class="l"><span class="n">   40 </span>            self._groupby_cache = self._cls_groupby_cache</div><div class="l"><span class="n">   41 </span></div><div class="l"><span class="n">   42 </span>        self._access_lock = threading.Lock()</div><div class="l"><span class="n">   43 </span></div></div><div class="cur"></div><div class="st"><span class="md"> <b>NORMAL</b>  SPELL [EN_US] </span><span class="fn"> co3/indexer.py</span><span class="py">python </span><span class="ut"> utf-8[unix] </span><span class="pc"> 0% [1/431<span class="ln"></span>] [1¢] </span><span class="tr"> <span class="tg"><i></i><i class="br"></i><i></i></span> [44]trailing </span></div></div></body></html>
